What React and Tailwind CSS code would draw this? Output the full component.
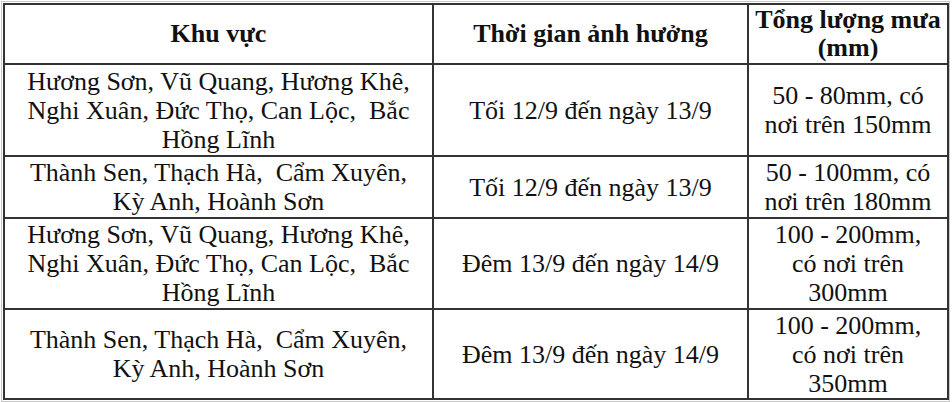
import React from "react";

const rows = [
  {
    h: "h-[92px]",
    a: ["Hương Sơn, Vũ Quang, Hương Khê,", "Nghi Xuân, Đức Thọ, Can Lộc,  Bắc", "Hồng Lĩnh"],
    b: ["Tối 12/9 đến ngày 13/9"],
    c: ["50 - 80mm, có", "nơi trên 150mm"],
  },
  {
    h: "h-[62px]",
    a: ["Thành Sen, Thạch Hà,  Cẩm Xuyên,", "Kỳ Anh, Hoành Sơn"],
    b: ["Tối 12/9 đến ngày 13/9"],
    c: ["50 - 100mm, có", "nơi trên 180mm"],
  },
  {
    h: "h-[91px]",
    a: ["Hương Sơn, Vũ Quang, Hương Khê,", "Nghi Xuân, Đức Thọ, Can Lộc,  Bắc", "Hồng Lĩnh"],
    b: ["Đêm 13/9 đến ngày 14/9"],
    c: ["100 - 200mm,", "có nơi trên", "300mm"],
  },
  {
    h: "h-[90px]",
    a: ["Thành Sen, Thạch Hà,  Cẩm Xuyên,", "Kỳ Anh, Hoành Sơn"],
    b: ["Đêm 13/9 đến ngày 14/9"],
    c: ["100 - 200mm,", "có nơi trên", "350mm"],
  },
];

function Lines({ items }) {
  return (
    <>
      {items.map((t, i) => (
        <div key={i} className="whitespace-pre">
          {t}
        </div>
      ))}
    </>
  );
}

export default function App() {
  const cell = "border-2 border-[#333] text-center align-middle p-0 overflow-hidden";
  return (
    <div className="w-[952px] h-[402px] bg-white relative overflow-hidden font-['Liberation_Serif']">
      <div className="absolute left-[1px] top-[1px] w-[949px] h-[401px] border border-[#c8c8c8]" />
      <div className="pt-[3px] pl-[3px]">
        <table className="border-collapse w-[944px] table-fixed font-['Liberation_Serif'] text-[26px] leading-[29px] text-[#111]">
          <colgroup>
            <col className="w-[429px]" />
            <col className="w-[315px]" />
            <col className="w-[200px]" />
          </colgroup>
          <thead>
            <tr className="h-[60px]">
              <th className={cell + " font-bold leading-[28px]"}>Khu vực</th>
              <th className={cell + " font-bold leading-[28px]"}>Thời gian ảnh hưởng</th>
              <th className={cell + " font-bold leading-[28px]"}>
                <div>Tổng lượng mưa</div>
                <div>(mm)</div>
              </th>
            </tr>
          </thead>
          <tbody>
            {rows.map((r, i) => (
              <tr key={i} className={r.h}>
                <td className={cell}>
                  <Lines items={r.a} />
                </td>
                <td className={cell}>
                  <Lines items={r.b} />
                </td>
                <td className={cell}>
                  <Lines items={r.c} />
                </td>
              </tr>
            ))}
          </tbody>
        </table>
      </div>
    </div>
  );
}
